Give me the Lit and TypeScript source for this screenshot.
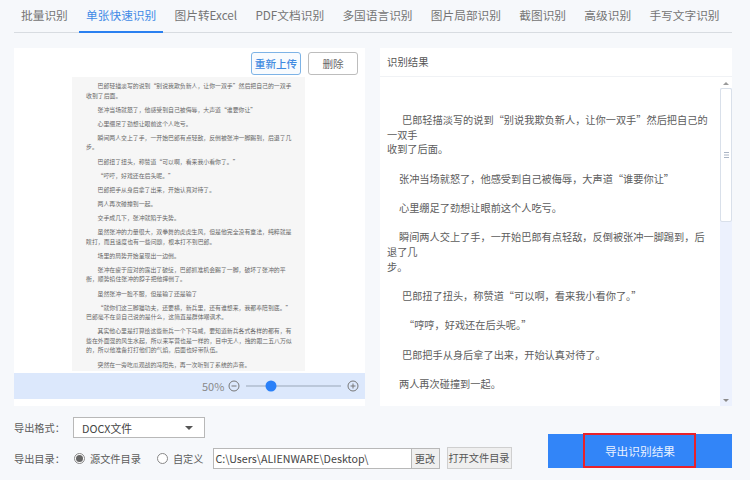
import { LitElement, html, css } from "lit";
import { customElement } from "lit/decorators.js";

const tabs = ["批量识别", "单张快速识别", "图片转Excel", "PDF文档识别", "多国语言识别", "图片局部识别", "截图识别", "高级识别", "手写文字识别"];
const C = "\uFF0C";
const COLON = "\uFF1A";

const doc: [string, boolean][] = ([
  ["巴郎轻描淡写的说到“别说我欺负新人|让你一双手”然后把自己的一双手", true],
  ["收到了后面。", false],
  ["张冲当场就怒了|他感受到自己被侮辱|大声道“谁要你让”", true],
  ["心里绷足了劲想让眼前这个人吃亏。", true],
  ["瞬间两人交上了手|一开始巴郎有点轻敌|反倒被张冲一脚踢到|后退了几", true],
  ["步。", false],
  ["巴郎扭了扭头|称赞道“可以啊|看来我小看你了。”", true],
  ["“哼哼|好戏还在后头呢。”", true],
  ["巴郎把手从身后拿了出来|开始认真对待了。", true],
  ["两人再次碰撞到一起。", true],
  ["交手成几下|张冲就陷于失势。", true],
  ["虽然张冲的力量很大|双拳舞的虎虎生风|但是他完全没有章法|纯粹就是", true],
  ["瞎打|而且速度也有一些问题|根本打不到巴郎。", false],
  ["场里的局势开始呈现出一边倒。", true],
  ["张冲在疲于应对的露出了破绽|巴郎抓准机会踢了一脚|破坏了张冲的平", true],
  ["衡|顺势掐住张冲的脖子把他摔倒了。", false],
  ["虽然张冲一脸不服|但是输了还是输了", true],
  ["“就你们这三脚猫功夫|还要横|新兵里|还有谁想来|我都奉陪到底。”", true],
  ["巴郎毫不在意自己说的是什么|这简直是群体嘲讽术。", false],
  ["其实他心里是打算给这些新兵一个下马威|要知道新兵各式各样的都有|有", true],
  ["些在外面混的风生水起|所以来军营也是一样的|目中无人|拽的跟二五八万似", false],
  ["的|所以他准备打打他们的气焰|后面也好带队伍。", false],
  ["突然在一旁吃瓜观战的冯阳先|再一次听到了系统的声音。", true],
] as [string, boolean][]).map(([t, i]) => [t.replaceAll("|", C), i] as [string, boolean]);

const result: [string, string][] = ([
  ["巴郎轻描淡写的说到“别说我欺负新人|让你一双手”然后把自己的", "i1"],
  ["一双手", "cont"],
  ["收到了后面。", "last"],
  ["张冲当场就怒了|他感受到自己被侮辱|大声道“谁要你让”", "i2 last"],
  ["心里绷足了劲想让眼前这个人吃亏。", "i2 last"],
  ["瞬间两人交上了手|一开始巴郎有点轻敌|反倒被张冲一脚踢到|后", "i2"],
  ["退了几", "cont"],
  ["步。", "last"],
  ["巴郎扭了扭头|称赞道“可以啊|看来我小看你了。”", "i1 last"],
  ["“哼哼|好戏还在后头呢。”", "i3 last"],
  ["巴郎把手从身后拿了出来|开始认真对待了。", "i1 last"],
  ["两人再次碰撞到一起。", "i2 last"],
] as [string, string][]).map(([t, c]) => [t.replaceAll("|", C), c] as [string, string]);

@customElement("app-root")
export class AppRoot extends LitElement {
  static styles = css`
    :host { display: block; width: 750px; height: 480px; overflow: hidden; }
    * { box-sizing: border-box; }
    .root {
      width: 750px; height: 480px; padding: 0 18px 0 14px; background: #f6f8fb;
      font-family: "Noto Sans CJK SC", "Noto Sans", sans-serif; color: #555;
      display: flex; flex-direction: column;
    }
    .tabs { display: flex; gap: 4.3px; height: 33px; border-bottom: 1px solid #d8dce1; }
    .tab { padding: 0 7px; font-size: 11.7px; line-height: 30px; height: 33px; color: #747474; white-space: nowrap; }
    .tab.active { color: #3f8ae6; border-bottom: 2px solid #2a80f0; }
    .panels { display: grid; grid-template-columns: 351px 352px; gap: 15px; margin-top: 15px; height: 351px; }
    .left { background: #fff; display: flex; flex-direction: column; }
    .actions { height: 29px; padding: 4px 7px 0 0; display: flex; justify-content: flex-end; gap: 7px; }
    .btn {
      width: 50px; height: 23px; border-radius: 3px; border: 1px solid #bdbdbd; background: #fff;
      font: 10.6px/21px "Noto Sans CJK SC", sans-serif; color: #666; text-align: center;
    }
    .btn.primary { border-color: #7db3e6; color: #3f8ae0; font-weight: 500; background: #f8fbfe; }
    .page {
      margin-left: 58px; width: 233px; height: 294px; background: #f6f6f6; overflow: hidden;
      padding: 4px 0 0 14px; font-size: 5.88px; line-height: 9.6px; color: #666; white-space: nowrap;
    }
    .page div { margin-bottom: 4.5px; }
    .page .hold { margin-bottom: 0; }
    .page .ind { padding-left: 11.5px; }
    .zoom {
      margin-top: 2px; height: 26px; background: #dce8fc; display: flex; align-items: center;
      justify-content: flex-end; padding-right: 6px; font-size: 11px; color: #8a8a8a;
    }
    .pct { width: 20px; margin-right: 6px; }
    .zoom svg { display: block; }
    .right { background: #fff; display: flex; flex-direction: column; }
    .rhead { height: 29px; border-bottom: 1px solid #f0f2f5; padding-left: 7px; font-size: 10.4px; line-height: 28px; color: #555; }
    .rbody { flex: 1; display: flex; min-height: 0; }
    .text { flex: 1; padding: 36px 0 0 7px; font-size: 10.2px; line-height: 14.67px; color: #5c5c5c; overflow: hidden; white-space: nowrap; }
    .text .last { margin-bottom: 14.67px; }
    .text .i1 { padding-left: 15px; }
    .text .i2 { padding-left: 12px; }
    .text .i3 { padding-left: 17px; }
    .sb { width: 12px; margin-top: 1px; background: #ecf1fd; display: flex; flex-direction: column; align-items: center; }
    .arrow { width: 12px; height: 10px; background: #fff; display: flex; align-items: center; justify-content: center; flex: none; }
    .arrow.down { background: transparent; margin-top: auto; }
    .thumb {
      width: 12px; height: 134px; background: #fff; border: 1px solid #d9e0ea; border-radius: 2px;
      display: flex; align-items: center; justify-content: center; flex: none;
    }
    .bottom { flex: 1; display: flex; padding-top: 18px; }
    .form { display: flex; flex-direction: column; gap: 9px; font-size: 10.2px; color: #5c5c5c; }
    .row { display: flex; align-items: center; }
    .label { width: 59px; flex: none; white-space: nowrap; }
    .select {
      width: 132px; height: 21px; background: #fff; border: 1px solid #b8b8b8; display: flex; align-items: center;
      justify-content: space-between; padding: 0 11px 0 8px; font-size: 10.8px; color: #444;
    }
    .caret { width: 0; height: 0; border-left: 4px solid transparent; border-right: 4px solid transparent; border-top: 4px solid #555; }
    .radio { width: 11px; height: 11px; border: 1px solid #888; border-radius: 50%; margin-left: 1px; margin-right: 5px; display: flex; align-items: center; justify-content: center; background: #fff; flex: none; }
    .radio i { display: block; width: 7px; height: 7px; border-radius: 50%; background: #666; }
    .opt { margin-right: 15px; white-space: nowrap; }
    .opt.b { margin-right: 9px; }
    .input {
      width: 198px; height: 21px; background: #fff; border: 1px solid #b8b8b8; border-right: none;
      padding-left: 2px; font-size: 10.7px; line-height: 19px; color: #444; white-space: nowrap; overflow: hidden;
    }
    .chg {
      width: 29px; height: 21px; background: #efefef; border: 1px solid #b8b8b8; text-align: center; font-size: 10.2px; line-height: 19px; color: #555; flex: none;
    }
    .open {
      margin-left: 7px; width: 65px; height: 22px; background: #efefef; border: 1px solid #cfcfcf; text-align: center;
      font-size: 10.2px; line-height: 20px; color: #555; white-space: nowrap; flex: none;
    }
    .export {
      position: relative; margin-left: auto; align-self: flex-start; margin-top: 17px; width: 184px; height: 34px; background: #3285f8;
      color: #eaf2ff; font-size: 11.7px; line-height: 34px; text-align: center;
    }
    .mark { position: absolute; left: 35px; top: -1px; width: 113px; height: 35px; border: 2px solid #e8222b; }
  `;

  render() {
    return html`<div class="root" lang="zh-CN">
      <div class="tabs">${tabs.map((t, i) => html`<div class="tab ${i === 1 ? "active" : ""}">${t}</div>`)}</div>
      <div class="panels">
        <div class="left">
          <div class="actions"><div class="btn primary">重新上传</div><div class="btn">删除</div></div>
          <div class="page">
            ${doc.map(([t, ind], i) => {
              const hold = doc[i + 1] && !doc[i + 1][1];
              return html`<div class="${ind ? "ind" : ""} ${hold ? "hold" : ""}">${t}</div>`;
            })}
          </div>
          <div class="zoom">
            <span class="pct">50%</span>
            <svg width="12" height="12" viewBox="0 0 12 12" fill="none" stroke="#777"><circle cx="6" cy="6" r="5"/><path d="M3.5 6h5"/></svg>
            <svg width="107" height="14" viewBox="0 0 107 14"><path d="M6 7h95" stroke="#9aa7b8"/><circle cx="31" cy="7" r="5.5" fill="#2a80f8"/></svg>
            <svg width="12" height="12" viewBox="0 0 12 12" fill="none" stroke="#777"><circle cx="6" cy="6" r="5"/><path d="M3.5 6h5M6 3.5v5"/></svg>
          </div>
        </div>
        <div class="right">
          <div class="rhead">识别结果</div>
          <div class="rbody">
            <div class="text">${result.map(([t, c]) => html`<div class="${c}">${t}</div>`)}</div>
            <div class="sb">
              <div class="arrow"><svg width="6" height="4" viewBox="0 0 6 4"><path d="M0 4l3-3 3 3z" fill="#9a9a9a"/></svg></div>
              <div class="thumb"><svg width="5" height="6" viewBox="0 0 5 6"><path d="M0 .5h5M0 3h5M0 5.5h5" stroke="#aab4c4"/></svg></div>
              <div class="arrow down"><svg width="6" height="4" viewBox="0 0 6 4"><path d="M0 0h6L3 3z" fill="#8a8a8a"/></svg></div>
            </div>
          </div>
        </div>
      </div>
      <div class="bottom">
        <div class="form">
          <div class="row"><span class="label">导出格式${COLON}</span><div class="select"><span>DOCX文件</span><span class="caret"></span></div></div>
          <div class="row">
            <span class="label">导出目录${COLON}</span>
            <span class="radio"><i></i></span><span class="opt">源文件目录</span>
            <span class="radio"></span><span class="opt b">自定义</span>
            <div class="input">C:\\Users\\ALIENWARE\\Desktop\\</div><div class="chg">更改</div><div class="open">打开文件目录</div>
          </div>
        </div>
        <div class="export">导出识别结果<span class="mark"></span></div>
      </div>
    </div>`;
  }
}
